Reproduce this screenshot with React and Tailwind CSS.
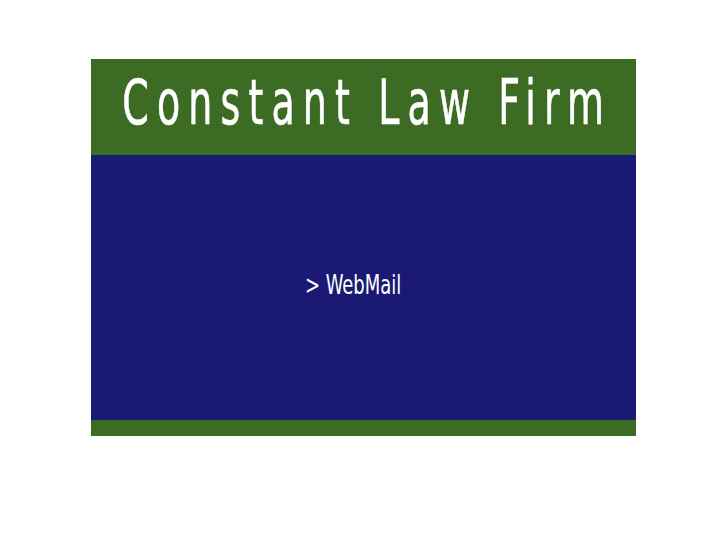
import React from "react";

const font = { fontFamily: '"DejaVu Sans Condensed", "DejaVu Sans", sans-serif', fontStretch: "condensed" };

const App = () => {
  return (
    <div className="min-h-screen bg-white pt-[59px]">
      <div className="mx-auto w-[545px]">
        {/* HEADER */}
        <div className="h-[96px] bg-[#3c6b24] flex items-center justify-center overflow-hidden">
          <h1
            className="text-white text-[62px] leading-none tracking-[12px] whitespace-nowrap scale-x-[0.68] pb-2 ml-[8px] [-webkit-text-stroke:0.6px_white]"
            style={font}
          >
            Constant Law Firm
          </h1>
        </div>

        {/* BODY */}
        <div className="h-[265px] bg-[#1a1a74] flex items-center justify-center">
          <a
            href="#"
            className="text-white text-[27px] leading-none whitespace-nowrap scale-x-[0.74] mr-[20px] mt-[-6px]"
            style={font}
          >
            &gt; WebMail
          </a>
        </div>

        {/* FOOTER */}
        <div className="h-[16px] bg-[#3c6b24]" />
      </div>
    </div>
  );
};

export default App;
